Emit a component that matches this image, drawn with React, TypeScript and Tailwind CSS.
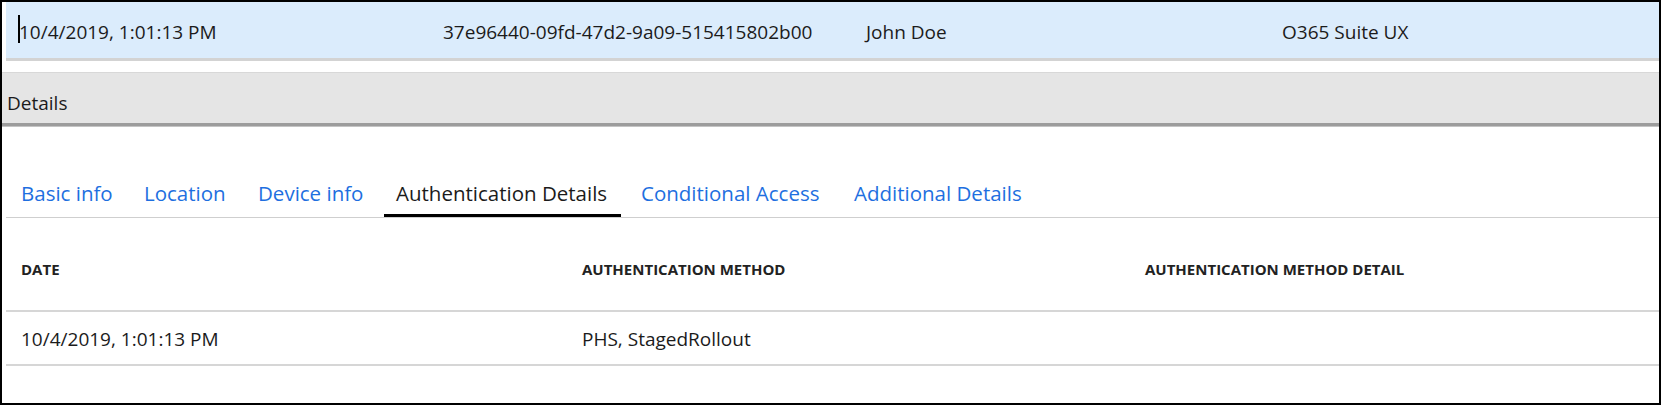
import React from 'react'

const tabs = [
  { label: 'Basic info', w: 'w-[115px]' },
  { label: 'Location', w: 'w-[106px]' },
  { label: 'Device info', w: 'w-[130px]' },
  { label: 'Authentication Details', w: 'w-[237px]', active: true },
  { label: 'Conditional Access', w: 'w-[205px]' },
  { label: 'Additional Details', w: 'w-[192px]' },
]

export default function App() {
  return (
    <div className="h-[405px] w-full border-2 border-black bg-white font-['Segoe_UI','Open_Sans',sans-serif] text-[#1b1b1b] overflow-hidden">
      {/* selected sign-in row */}
      <div className="ml-[4px] flex bg-[#dbecfc] border-b-[3px] border-[#d3d3d3] pt-[17px] pb-[13px] text-[19px] leading-[26px]">
        <div className="relative w-[424px] pl-[13px]">
          <span className="absolute left-[12px] top-[-4px] h-[28px] w-[2px] bg-black" />
          10/4/2019, 1:01:13 PM
        </div>
        <div className="w-[423px] pl-[13px]">37e96440-09fd-47d2-9a09-515415802b00</div>
        <div className="w-[416px] pl-[13px]">John Doe</div>
        <div className="pl-[13px]">O365 Suite UX</div>
      </div>

      {/* details header band */}
      <div className="mt-[11px] bg-[#e5e5e5] border-t border-[#d8d8d8] pt-[17px] pb-[7px] pl-[5px] text-[19px] leading-[26px]">
        Details
      </div>
      <div className="h-[3px] bg-[#9c9c9c]" />
      <div className="h-[1px] bg-[#c4c4c4]" />

      <div className="pl-[4px]">
        {/* tabs */}
        <div className="mt-[52px] flex gap-2 pl-[3px] border-b border-[#cfcfcf]">
          {tabs.map((t) => (
            <div
              key={t.label}
              className={`${t.w} pl-3 pb-[7px] text-[20.5px] leading-[28px] whitespace-nowrap border-b-[3px] ${
                t.active ? 'border-black text-[#1b1b1b]' : 'border-transparent text-[#1e6fe0]'
              }`}
            >
              {t.label}
            </div>
          ))}
        </div>

        {/* auth details table */}
        <div className="grid grid-cols-[561px_563px_1fr] border-b-2 border-[#d6d6d6] pt-[41px] pb-[31px] text-[15px] leading-[20px] font-bold text-[#222]">
          <div className="pl-[15px]">DATE</div>
          <div className="pl-[15px]">AUTHENTICATION METHOD</div>
          <div className="pl-[15px]">AUTHENTICATION METHOD DETAIL</div>
        </div>
        <div className="grid grid-cols-[561px_563px_1fr] border-b-2 border-[#d6d6d6] pt-[14px] pb-[12px] text-[19px] leading-[26px]">
          <div className="pl-[15px]">10/4/2019, 1:01:13 PM</div>
          <div className="pl-[15px]">PHS, StagedRollout</div>
          <div className="pl-[15px]" />
        </div>
      </div>
    </div>
  )
}
